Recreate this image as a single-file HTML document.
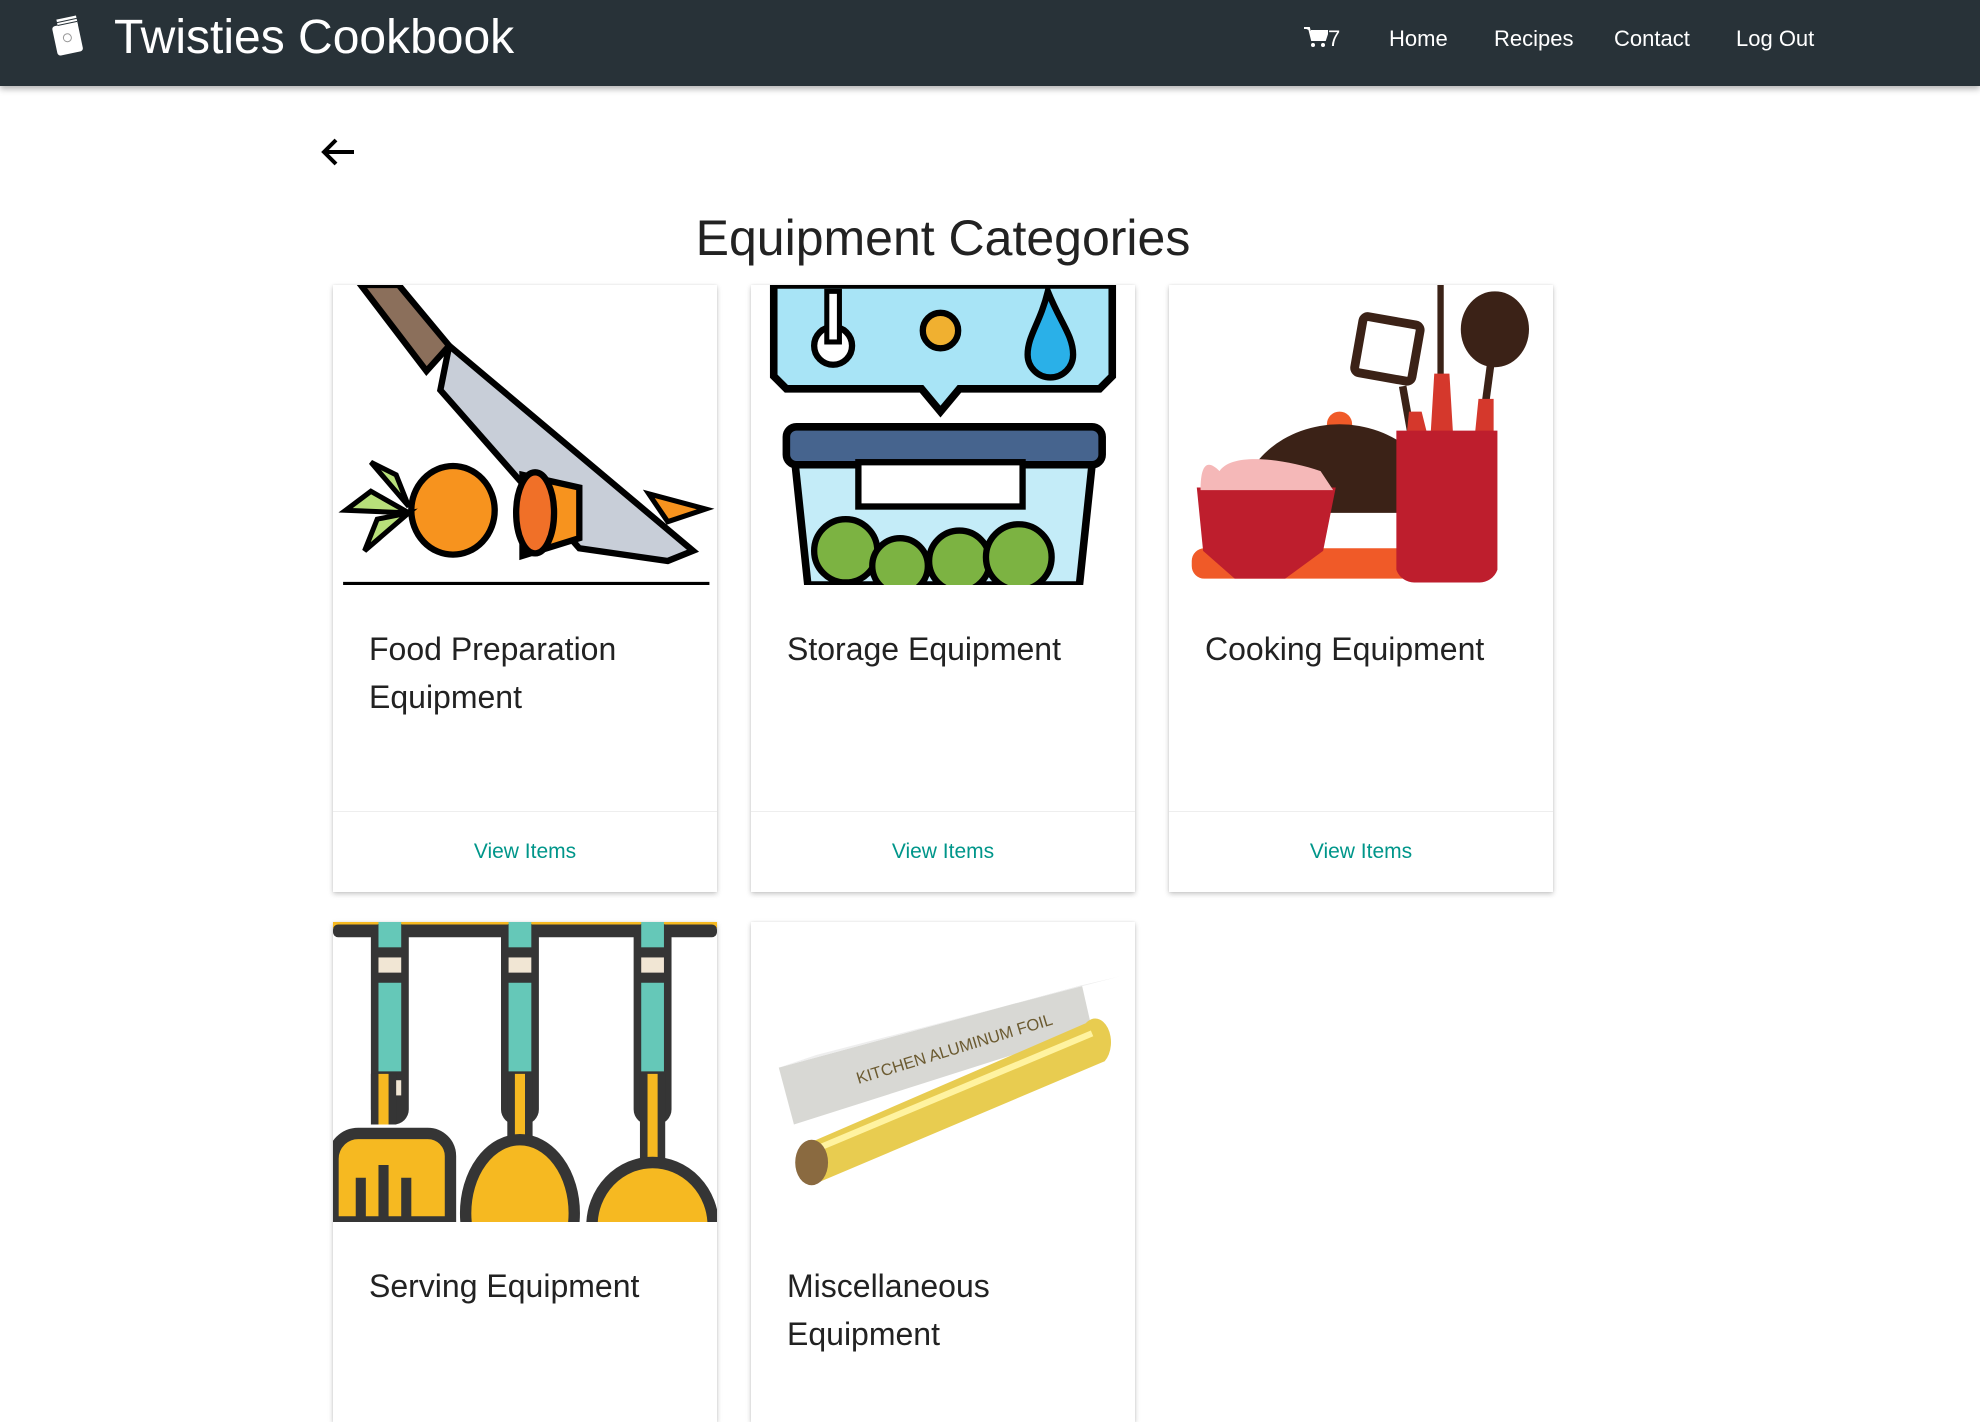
<!DOCTYPE html>
<html><head><meta charset="utf-8"><style>
*{box-sizing:border-box;margin:0;padding:0}
body{width:1980px;height:1375px;overflow:hidden;background:#fff;font-family:"Liberation Sans",sans-serif;position:relative}
.nav{position:absolute;left:0;top:0;width:1980px;height:86px;background:#283238;box-shadow:0 3px 6px rgba(0,0,0,.3)}
.brand{position:absolute;left:114px;top:10px;color:#fff;font-size:48px;}
.nl{position:absolute;top:26px;color:#fff;font-size:22px}
h1{position:absolute;left:333px;width:1220px;top:209px;text-align:center;font-weight:normal;font-size:50px;color:#222}
.card{position:absolute;width:384px;background:#fff;box-shadow:0 2px 5px rgba(0,0,0,.22),0 0 2px rgba(0,0,0,.08)}
.card svg{display:block;width:384px;height:300px}
.t{position:absolute;left:36px;top:340px;font-size:32px;line-height:48px;color:#222;font-weight:300}
.f{position:absolute;left:0;top:526px;width:384px;height:81px;border-top:1px solid #eee;text-align:center;line-height:80px;color:#00968a;font-size:21px}
</style></head><body>
<div class="nav">
<svg style="position:absolute;left:46px;top:14px" width="40" height="44" viewBox="0 0 40 44"><g transform="rotate(-12 20 22)"><rect x="8" y="10" width="26" height="30" rx="3" fill="#fff"/><rect x="14" y="4" width="20" height="10" fill="#fff"/><path d="M14 7h20M14 10h20" stroke="#283238" stroke-width="1"/><circle cx="21" cy="24" r="4" fill="none" stroke="#999"/></g></svg>
<div class="brand">Twisties Cookbook</div>
<div class="nl" style="left:1304px"><svg width="24" height="22" viewBox="0 0 24 22" style="vertical-align:-2px"><path d="M0 2h5l3 12h13l3-9H7" fill="#fff" stroke="#fff" stroke-width="2"/><circle cx="9" cy="19" r="2" fill="#fff"/><circle cx="19" cy="19" r="2" fill="#fff"/></svg>7</div>
<div class="nl" style="left:1389px">Home</div>
<div class="nl" style="left:1494px">Recipes</div>
<div class="nl" style="left:1614px">Contact</div>
<div class="nl" style="left:1736px">Log Out</div>
</div>
<svg style="position:absolute;left:320px;top:137px" width="36" height="30" viewBox="0 0 36 30"><path d="M34 15H4M16 3L4 15l12 12" fill="none" stroke="#000" stroke-width="4"/></svg>
<h1>Equipment Categories</h1>

<div class="card" style="left:333px;top:285px;height:607px">
<svg viewBox="0 0 304 237" preserveAspectRatio="none">
<path d="M22 0h30l40 48-18 20z" fill="#8b6f5b" stroke="#000" stroke-width="5"/>
<path d="M92 48L285 210l-20 8-70-10-110-125z" fill="#c8ced8" stroke="#000" stroke-width="5"/>
<path d="M250 165l45 12-30 10z" fill="#f7931e" stroke="#000" stroke-width="4"/>
<ellipse cx="95" cy="178" rx="33" ry="35" fill="#f7931e" stroke="#000" stroke-width="5"/>
<path d="M150 150l45 10v40l-45 14z" fill="#f7931e" stroke="#000" stroke-width="5"/>
<ellipse cx="160" cy="180" rx="15" ry="32" fill="#f07028" stroke="#000" stroke-width="5"/>
<path d="M60 180l-50-2 20-15zM60 180l-35 30 10-25zM60 175l-30-35 20 10z" fill="#b8e07a" stroke="#000" stroke-width="4"/>
<path d="M8 236h290" stroke="#000" stroke-width="3"/>
</svg>
<div class="t">Food Preparation<br>Equipment</div><div class="f">View Items</div></div>

<div class="card" style="left:751px;top:285px;height:607px">
<svg viewBox="0 0 304 237" preserveAspectRatio="none">
<path d="M18 0h268v72l-10 10H165l-15 18-15-18H28l-10-10z" fill="#a8e4f6" stroke="#000" stroke-width="6"/>
<circle cx="65" cy="48" r="15" fill="#fff" stroke="#000" stroke-width="5"/><rect x="60" y="5" width="10" height="40" fill="#fff" stroke="#000" stroke-width="4"/>
<circle cx="150" cy="36" r="14" fill="#f0b030" stroke="#000" stroke-width="5"/>
<path d="M235 5c10 25 20 35 20 50a18 18 0 01-36 0c0-15 10-25 16-50z" fill="#2ab0e8" stroke="#000" stroke-width="5"/>
<rect x="28" y="112" width="250" height="30" rx="8" fill="#46648e" stroke="#000" stroke-width="6"/>
<path d="M35 142h235l-10 95H45z" fill="#c4ecf8" stroke="#000" stroke-width="6"/>
<rect x="85" y="140" width="130" height="35" fill="#fff" stroke="#000" stroke-width="5"/>
<circle cx="75" cy="210" r="25" fill="#7cb342" stroke="#000" stroke-width="5"/><circle cx="118" cy="222" r="22" fill="#7cb342" stroke="#000" stroke-width="5"/><circle cx="165" cy="218" r="24" fill="#7cb342" stroke="#000" stroke-width="5"/><circle cx="212" cy="215" r="26" fill="#7cb342" stroke="#000" stroke-width="5"/>
</svg>
<div class="t">Storage Equipment</div><div class="f">View Items</div></div>

<div class="card" style="left:1169px;top:285px;height:607px">
<svg viewBox="0 0 304 237" preserveAspectRatio="none">
<rect x="150" y="28" width="46" height="45" rx="4" fill="#fff" stroke="#3b2217" stroke-width="7" transform="rotate(10 173 50)"/>
<path d="M185 80l8 45" stroke="#3b2217" stroke-width="6"/>
<path d="M215 0v110" stroke="#3b2217" stroke-width="5"/>
<ellipse cx="258" cy="35" rx="27" ry="30" fill="#3b2217"/><path d="M255 60l-8 60" stroke="#3b2217" stroke-width="6"/>
<path d="M190 100h10l5 20h-17zM210 70h12l3 50h-18zM245 90h12v30h-15z" fill="#d5382c"/>
<circle cx="135" cy="110" r="10" fill="#f05a28"/>
<path d="M55 180a80 70 0 01160 0z" fill="#3b2217"/>
<rect x="18" y="208" width="230" height="24" rx="10" fill="#f05a28"/>
<path d="M22 160h110l-10 50-30 22h-40l-25-22z" fill="#be1e2d"/>
<path d="M25 162c0-20 5-25 15-15 10-15 50-10 80 0l10 15z" fill="#f5b8b8"/>
<path d="M180 115h80v110a15 15 0 01-15 10h-50a15 15 0 01-15-10z" fill="#be1e2d"/>
</svg>
<div class="t">Cooking Equipment</div><div class="f">View Items</div></div>

<div class="card" style="left:333px;top:922px;height:500px">
<svg viewBox="0 0 304 237" preserveAspectRatio="none">
<rect x="0" y="0" width="304" height="5" fill="#f6b921"/>
<rect x="0" y="2" width="304" height="10" rx="4" fill="#353535"/>
<g fill="#353535"><rect x="30" y="0" width="30" height="160" rx="12"/><rect x="133" y="0" width="30" height="160" rx="12"/><rect x="238" y="0" width="30" height="160" rx="12"/></g>
<g fill="#65c8b8"><rect x="36" y="0" width="18" height="20"/><rect x="36" y="48" width="18" height="70"/><rect x="139" y="0" width="18" height="20"/><rect x="139" y="48" width="18" height="70"/><rect x="244" y="0" width="18" height="20"/><rect x="244" y="48" width="18" height="70"/></g>
<g fill="#f1e6d4"><rect x="36" y="28" width="18" height="12"/><rect x="36" y="125" width="18" height="12"/><rect x="139" y="28" width="18" height="12"/><rect x="139" y="125" width="18" height="12"/><rect x="244" y="28" width="18" height="12"/><rect x="244" y="125" width="18" height="12"/></g>
<path d="M0 237v-50a20 20 0 0120-20h55a18 18 0 0118 18v52z" fill="#f6b921" stroke="#353535" stroke-width="9"/>
<path d="M40 160V120M148 180V120M253 190V120" stroke="#353535" stroke-width="20"/><path d="M40 160V120M148 180V120M253 190V120" stroke="#f6b921" stroke-width="8"/>
<ellipse cx="148" cy="230" rx="43" ry="58" fill="#f6b921" stroke="#353535" stroke-width="9"/>
<ellipse cx="253" cy="240" rx="48" ry="50" fill="#f6b921" stroke="#353535" stroke-width="9"/>
<path d="M22 237v-35M40 237v-45M58 237v-35" stroke="#353535" stroke-width="8"/>
</svg>
<div class="t">Serving Equipment</div></div>

<div class="card" style="left:751px;top:922px;height:500px">
<svg viewBox="0 0 304 237" preserveAspectRatio="none">
<path d="M22 115l240-65 8 35-236 75z" fill="#d8d8d4"/>
<path d="M22 115l30-10 240-62-30 7z" fill="#eee"/>
<text x="85" y="128" font-size="13" fill="#6b5a30" transform="rotate(-17 85 128)" font-family="Liberation Sans">KITCHEN ALUMINUM FOIL</text>
<path d="M45 175l220-95a12 18 0 0115 30L55 205z" fill="#e8cc50"/>
<path d="M50 180l220-92" stroke="#fff3a0" stroke-width="5"/>
<ellipse cx="48" cy="190" rx="13" ry="18" fill="#8a6a40"/>
</svg>
<div class="t">Miscellaneous<br>Equipment</div></div>
</body></html>
